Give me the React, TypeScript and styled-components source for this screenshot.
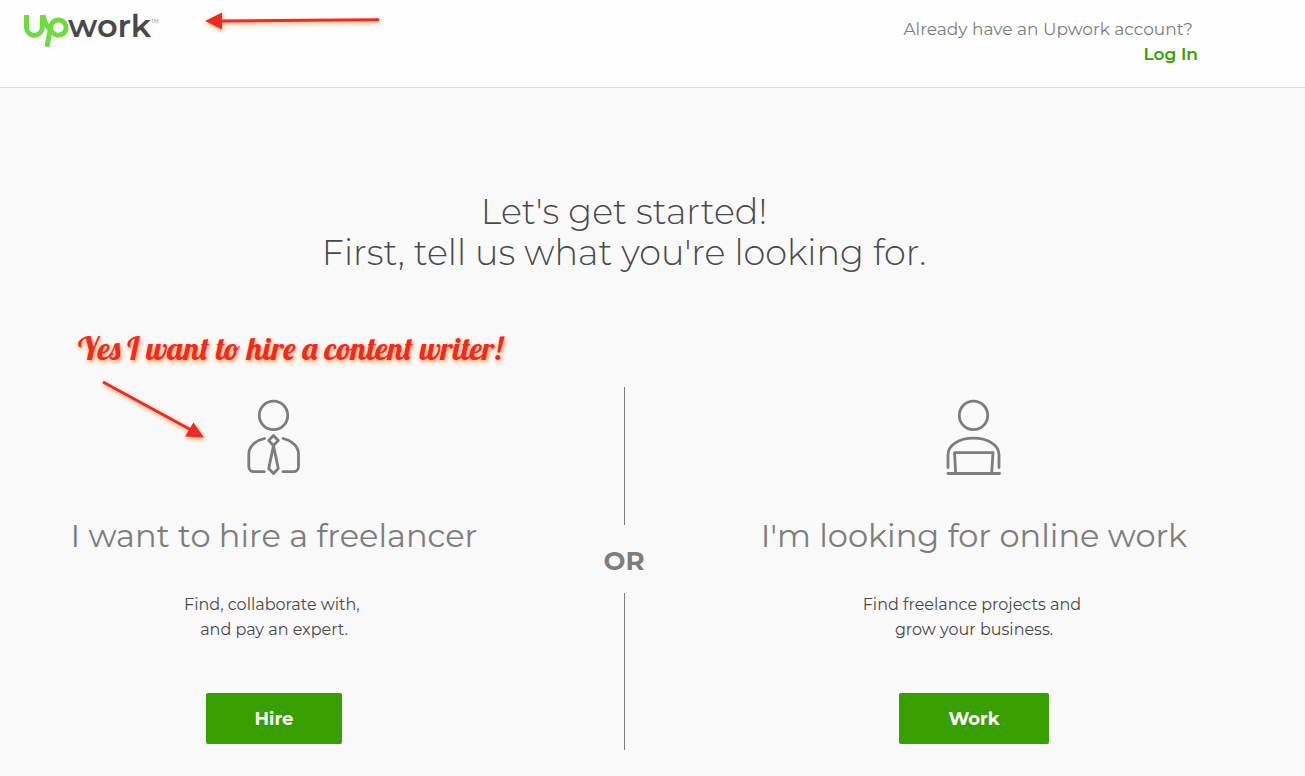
import React from "react";
import styled, { createGlobalStyle } from "styled-components";

const GlobalStyle = createGlobalStyle`
  *, *::before, *::after { box-sizing: border-box; }
  body {
    margin: 0;
    background: #f9f9f9;
    color: #494949;
    font-family: Gotham, Montserrat, Inter, sans-serif;
  }
  h1, h2, p { margin: 0; }
`;

const Page = styled.div`
  position: relative;
  min-height: 100vh;
`;

const Header = styled.header`
  display: flex;
  justify-content: space-between;
  align-items: flex-start;
  height: 88px;
  padding: 0 107px 0 24px;
  background: #fefefe;
  border-bottom: 1px solid #dcdcdc;
`;

const LogoLink = styled.a`
  display: block;

  svg { display: block; }
`;

const Account = styled.div`
  display: flex;
  flex-direction: column;
  align-items: flex-end;
  padding-top: 17px;
  font-size: 17px;
  line-height: 25px;
  color: #7d7d7d;
`;

const AccountPrompt = styled.span`
  padding-right: 5px;
`;

const LoginLink = styled.a`
  color: #37a000;
  font-weight: 600;
  text-decoration: none;
`;

const Main = styled.main`
  padding: 103px 57px 24px 0;
`;

const Title = styled.h1`
  font-size: 35px;
  font-weight: 300;
  line-height: 41px;
  text-align: center;
`;

const Choices = styled.div`
  display: grid;
  grid-template-columns: 1fr 152px 1fr;
  margin-top: 114px;
`;

const Choice = styled.section`
  display: flex;
  flex-direction: column;
  align-items: center;
  padding-top: 13px;
  text-align: center;
`;

const ChoiceTitle = styled.h2`
  margin-top: 40px;
  font-size: 32px;
  font-weight: 400;
  line-height: 40px;
  color: #7d7d7d;
  white-space: nowrap;
`;

const ChoiceText = styled.p`
  margin-top: 36px;
  font-size: 16px;
  line-height: 25px;
`;

const ActionButton = styled.button`
  height: 51px;
  margin-top: 51px;
  padding: 0 49px;
  border: 0;
  border-radius: 2px;
  background: #37a000;
  color: #fff;
  font: inherit;
  font-size: 18px;
  font-weight: 700;
  cursor: pointer;
`;

const Divider = styled.div`
  display: flex;
  flex-direction: column;
  align-items: center;
  height: 363px;

  &::before,
  &::after {
    content: "";
    width: 1px;
    background: #7d7d7d;
  }
  &::before { flex: 138; }
  &::after { flex: 157; }
`;

const DividerLabel = styled.span`
  padding-top: 4px;
  font-size: 26px;
  font-weight: 700;
  line-height: 64px;
  color: #7d7d7d;
`;

const Note = styled.p`
  position: absolute;
  left: 78px;
  top: 327px;
  font-family: Lobster, "Liberation Serif", serif;
  font-size: 32px;
  font-weight: 400;
  line-height: 42px;
  color: #ee2a24;
  white-space: nowrap;
  text-shadow: 1px 2px 4px #ff9a4d;
`;

const Arrow = styled.svg<{ $left: number; $top: number }>`
  position: absolute;
  left: ${(p) => p.$left}px;
  top: ${(p) => p.$top}px;
  overflow: visible;
  color: #ee2a24;
  filter: drop-shadow(1px 2px 2px #ffa463);
  pointer-events: none;
`;

const IconSvg = styled.svg`
  display: block;
  overflow: visible;
  fill: none;
  stroke: #7d7d7d;
  stroke-width: 2.8;
  stroke-linecap: round;
  stroke-linejoin: round;
`;

function Logo() {
  return (
    <svg width="150" height="56" viewBox="0 -8 150 56" role="img" aria-label="Upwork">
      <g fill="none" stroke="#6fda44" strokeWidth="5">
        <path d="M2.500 7v12.500a7.900 7.900 0 0 0 15.800 0V7" />
        <path d="M19 7c1 5.500 3.500 10.500 6.800 14.500 2 2.400 4.300 5.800 8.700 5.800a7.700 7.700 0 1 0-7.700-8.800L23 38.700" />
      </g>
      <text x="44" y="29" fill="#494949" fontFamily="Gotham, Montserrat, Inter, sans-serif" fontSize="32" fontWeight="600">work</text>
      <text x="127" y="15" fill="#6b6b6b" fontFamily="Gotham, Montserrat, Inter, sans-serif" fontSize="5">TM</text>
    </svg>
  );
}

function HireIcon() {
  return (
    <IconSvg width="54" height="76" viewBox="0 0 54 76" aria-hidden="true">
      <circle cx="26.500" cy="15.400" r="14.200" />
      <path d="M17.500 38.500C8.500 40.500 1.800 46.500 1.800 54v12.700a5 5 0 0 0 5 5h10.500" />
      <path d="M36 38.500c9 2 15.500 8 15.500 15.500v12.700a5 5 0 0 1-5 5H36" />
      <path d="M26.500 35.600l4.800 4.900-4.800 4.900-4.800-4.900z" />
      <path d="M26.500 45.600l4.800 23-4.800 4.900-4.800-4.900z" />
    </IconSvg>
  );
}

function WorkIcon() {
  return (
    <IconSvg width="54" height="76" viewBox="0 0 54 76" aria-hidden="true">
      <circle cx="26.500" cy="15.400" r="14.200" />
      <path d="M1 67.500V55C1 45 12 38.200 26.500 38.200S52 45 52 55v12.500" />
      <path d="M8.700 73L7.500 52.700h38.500l-1.300 20.300" />
      <path d="M1 73.500h51.500" />
    </IconSvg>
  );
}

export default function App() {
  return (
    <>
      <GlobalStyle />
      <Page>
        <Header>
          <LogoLink href="#home"><Logo /></LogoLink>
          <Account>
            <AccountPrompt>Already have an Upwork account?</AccountPrompt>
            <LoginLink href="#login">Log In</LoginLink>
          </Account>
        </Header>
        <Main>
          <Title>
            Let's get started!
            <br />
            First, tell us what you're looking for.
          </Title>
          <Choices>
            <Choice>
              <HireIcon />
              <ChoiceTitle>I want to hire a freelancer</ChoiceTitle>
              <ChoiceText>
                Find, collaborate with,&nbsp;
                <br />
                and pay an expert.
              </ChoiceText>
              <ActionButton type="button">Hire</ActionButton>
            </Choice>
            <Divider>
              <DividerLabel>OR</DividerLabel>
            </Divider>
            <Choice>
              <WorkIcon />
              <ChoiceTitle>I'm looking for online work</ChoiceTitle>
              <ChoiceText>
                Find freelance projects and&nbsp;
                <br />
                grow your business.
              </ChoiceText>
              <ActionButton type="button">Work</ActionButton>
            </Choice>
          </Choices>
        </Main>
        <Note>Yes I want to hire a content writer!</Note>
        <Arrow $left={205} $top={12} width="174" height="18" viewBox="0 0 174 18" aria-hidden="true">
          <path d="M174 7.800L14 9" stroke="currentColor" strokeWidth="3" />
          <path d="M0 9L17 .5v17z" fill="currentColor" />
        </Arrow>
        <Arrow $left={103} $top={381} width="101" height="57" viewBox="0 0 101 57" aria-hidden="true">
          <path d="M0 1l90 49" stroke="currentColor" strokeWidth="3" />
          <path d="M101 56.500L90.500 41.500 82 55.500z" fill="currentColor" />
        </Arrow>
      </Page>
    </>
  );
}
